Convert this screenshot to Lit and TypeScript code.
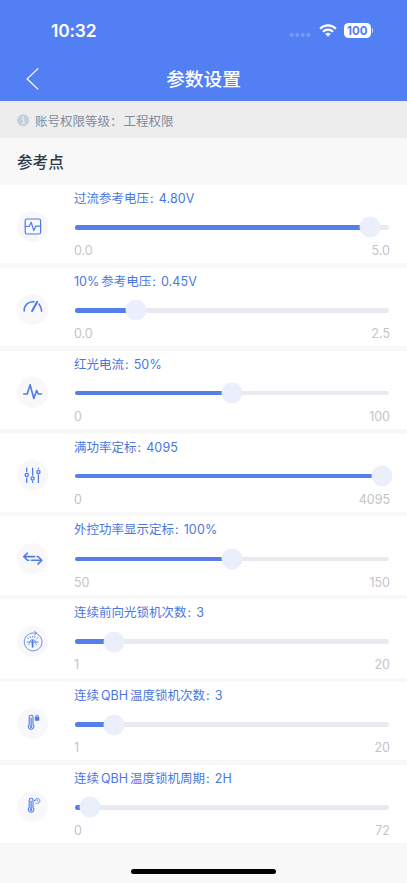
import { LitElement, html, svg, css } from "lit";
import { customElement, property } from "lit/decorators.js";

const icons: Record<string, unknown> = {
  scope: svg`<rect x="8.2" y="8" width="15.4" height="15" rx="1.8"/><path d="M8.2 15.5h4.1l1.9-4.3 2.6 8.4 1.9-4.4h4.9"/>`,
  gauge: svg`<g stroke-width="1.5"><path d="M7.2 17.2a8.6 8.6 0 0 1 9.8-9.4"/><path d="M22 10q2.3 3 2.6 7.2"/><path d="M20.2 7.8l-5.1 9.2" stroke-width="2.1"/></g>`,
  pulse: svg`<path stroke-width="1.6" d="M6.8 17h3.4l2.9-9.2 3.7 13.7 2.8-8.1 1.6 3.6h3.3"/>`,
  sliders: svg`<path stroke-width="1.3" d="M9.7 8.2v3.4M9.7 18.2v4.2M15.6 8.2v7M15.6 21.7v.7M21.4 8.2v.2M21.4 15v7.4"/><g stroke-width="1.3"><circle cx="9.7" cy="15" r="1.6"/><circle cx="15.6" cy="18.4" r="1.6"/><circle cx="21.4" cy="11.9" r="1.6"/></g>`,
  arrows: svg`<path stroke-width="1.6" d="M17.6 13.6H7M10.4 10 6.8 13.6l3.6 3.6M14.4 17.3H24.7M21 13.5l3.8 3.8-3.8 3.8M20.2 13.6h.2M11.6 17.3h.2"/>`,
  light: svg`<g stroke-width=".85"><path d="M20.6 8.2a8.9 8.9 0 1 1-5.6-1.1h4.6M17.4 5.2l2.3 2-2.3 2"/><path d="M12.6 16a3.2 3.2 0 0 1 6.2 0M10 16.1h11.4M15.6 11.2v-1M11.8 12.7l-1-1M19.6 12.7l1-1M13.7 11.6l-.4-.9M17.6 11.6l.4-.9M12.8 17.6l-1.4 1.2M18.6 17.6l1.4 1.2"/><path stroke-width="1.8" d="M15.6 15v5.8"/></g>`,
  tempLock: svg`<g stroke-width="1.1"><path d="M12.2 16.4V9.2a1.9 1.9 0 0 1 3.8 0v7.2a2.8 2.8 0 1 1-3.8 0z"/><path d="M14.1 10v7" stroke-width="1.2"/><circle cx="14.1" cy="18.6" r=".8"/><rect x="18.2" y="9" width="3.8" height="3.6" rx=".5" fill="currentColor" stroke-width=".6"/><path d="M18.9 9V8.2a1.2 1.2 0 0 1 2.4 0V9" stroke-width=".9"/></g>`,
  tempClock: svg`<g stroke-width="1.1"><path d="M12.2 16.4V9.2a1.9 1.9 0 0 1 3.8 0v7.2a2.8 2.8 0 1 1-3.8 0z"/><path d="M14.1 10v7" stroke-width="1.2"/><circle cx="14.1" cy="18.6" r=".8"/><path d="M17.7 9.8a2.6 2.6 0 1 1 1 2.2M17 9.1l.8.9.9-.8M20.2 8.6v1.4l1 .3" stroke-width=".75"/></g>`,
};

interface Param {
  icon: string;
  label: string[];
  value: string;
  min: string;
  max: string;
  ratio: number;
}

const params: Param[] = [
  { icon: "scope", label: ["过流参考电压"], value: "4.80V", min: "0.0", max: "5.0", ratio: 0.96 },
  { icon: "gauge", label: ["10%", "参考电压"], value: "0.45V", min: "0.0", max: "2.5", ratio: 0.18 },
  { icon: "pulse", label: ["红光电流"], value: "50%", min: "0", max: "100", ratio: 0.5 },
  { icon: "sliders", label: ["满功率定标"], value: "4095", min: "0", max: "4095", ratio: 1 },
  { icon: "arrows", label: ["外控功率显示定标"], value: "100%", min: "50", max: "150", ratio: 0.5 },
  { icon: "light", label: ["连续前向光锁机次数"], value: "3", min: "1", max: "20", ratio: 2 / 19 },
  { icon: "tempLock", label: ["连续", "QBH", "温度锁机次数"], value: "3", min: "1", max: "20", ratio: 2 / 19 },
  { icon: "tempClock", label: ["连续", "QBH", "温度锁机周期"], value: "2H", min: "0", max: "72", ratio: 2 / 72 },
];

@customElement("param-row")
export class ParamRow extends LitElement {
  @property({ attribute: false }) param!: Param;

  static styles = css`
    :host {
      display: flex;
      height: 78.4px;
      background: #fff;
      padding: 0 17px;
      box-sizing: border-box;
    }
    .icon {
      width: 31px;
      height: 31px;
      margin: 26.3px 26px 0 0;
      border-radius: 50%;
      background: #f8f8fb;
      color: #4f7bea;
      flex: none;
    }
    .icon svg {
      display: block;
      margin-left: -0.4px;
      fill: none;
      stroke: currentColor;
      stroke-width: 1.2;
      stroke-linecap: round;
      stroke-linejoin: round;
    }
    .body {
      flex: 1;
      display: flex;
      flex-direction: column;
    }
    .label {
      display: flex;
      height: 18px;
      margin-top: 5px;
      line-height: 18px;
      font-size: 12.5px;
      font-weight: 400;
      color: #4a77df;
      white-space: nowrap;
    }
    .label .part + .part {
      margin-left: 2px;
    }
    .colon {
      margin: 0 5px 0 1px;
    }
    .value {
      letter-spacing: 0.15px;
    }
    .slider {
      position: relative;
      width: 314px;
      height: 4.6px;
      margin: 17.2px 0 0 1px;
      border-radius: 3px;
      background: #e8eaf0;
    }
    .fill {
      height: 100%;
      border-radius: 3px;
      background: #5580ec;
    }
    .thumb {
      position: absolute;
      top: 50%;
      width: 21px;
      height: 21px;
      border-radius: 50%;
      background: #ebeffc;
      transform: translate(-50%, -50%);
    }
    .range {
      display: flex;
      justify-content: space-between;
      margin-top: 12.4px;
      line-height: 18px;
      font-size: 12.5px;
      color: #c3c4c7;
      width: 316px;
    }
  `;

  render() {
    const p = this.param;
    const x = 7 + 300 * p.ratio;
    return html`
      <div class="icon"><svg width="31" height="31" viewBox="0 0 31 31">${icons[p.icon]}</svg></div>
      <div class="body">
        <div class="label">
          ${p.label.map((t) => html`<span class="part">${t}</span>`)}<span class="colon">:</span><span class="value">${p.value}</span>
        </div>
        <div class="slider">
          <div class="fill" style="width:${x}px"></div>
          <div class="thumb" style="left:${x}px"></div>
        </div>
        <div class="range"><span>${p.min}</span><span>${p.max}</span></div>
      </div>
    `;
  }
}

@customElement("app-root")
export class AppRoot extends LitElement {
  static styles = css`
    :host {
      display: flex;
      flex-direction: column;
      height: 883px;
      overflow: hidden;
      background: #f8f8f8;
      font-family: Inter, "Noto Sans CJK SC", sans-serif;
    }
    .header {
      height: 101.3px;
      background: #527ff3;
      color: #fff;
      flex: none;
    }
    .status {
      display: flex;
      align-items: center;
      height: 61px;
      padding: 0 34px 0 51px;
      box-sizing: border-box;
    }
    .time {
      flex: 1;
      font-size: 17.4px;
      font-weight: 600;
      letter-spacing: -0.2px;
    }
    .status svg {
      display: block;
    }
    .dots {
      margin: 9px 8px 0 0;
    }
    .wifi {
      margin-right: 7px;
    }
    .battery {
      display: flex;
      align-items: center;
    }
    .level {
      width: 27px;
      height: 15px;
      border-radius: 4.6px;
      background: #fff;
      color: #527ff3;
      font-size: 11.5px;
      font-weight: 700;
      line-height: 16px;
      text-align: center;
    }
    .tip {
      width: 1.4px;
      height: 4.5px;
      margin-left: 0.8px;
      border-radius: 0 2px 2px 0;
      background: #c7d6fb;
    }
    .nav {
      display: grid;
      grid-template-columns: 60px 1fr 60px;
      align-items: center;
      height: 35px;
    }
    .back {
      margin-left: 25px;
      display: block;
    }
    .title {
      font-size: 18.7px;
      font-weight: 500;
      text-align: center;
      line-height: 28px;
      padding-top: 2px;
    }
    .notice {
      display: flex;
      align-items: center;
      height: 37.2px;
      padding-left: 17px;
      background: #ededed;
      color: #7f8b9b;
      font-size: 12.5px;
      flex: none;
    }
    .notice span {
      padding-top: 2px;
    }
    .notice svg {
      margin: 1px 5px 0 0;
    }
    .level-name {
      margin-left: 1px;
    }
    .section {
      height: 46.5px;
      line-height: 49px;
      padding-left: 17px;
      font-size: 15.6px;
      font-weight: 500;
      color: #303a4b;
      flex: none;
    }
    .list {
      display: flex;
      flex-direction: column;
      gap: 4.46px;
    }
    .home {
      width: 145px;
      height: 5px;
      margin: auto auto 9px;
      border-radius: 3px;
      background: #000;
    }
  `;

  render() {
    return html`
      <div class="header">
        <div class="status">
          <div class="time">10:32</div>
          <svg class="dots" width="22" height="4" viewBox="0 0 22 4" fill="#7b9df6">
            <rect x="1" y=".2" width="3.5" height="3.5" rx="1" /><rect x="6.5" y=".2" width="3.5" height="3.5" rx="1" />
            <rect x="12" y=".2" width="3.5" height="3.5" rx="1" /><rect x="17.5" y=".2" width="3.5" height="3.5" rx="1" />
          </svg>
          <svg class="wifi" width="18" height="13" viewBox="0 0 18 13" fill="none" stroke="#fff" stroke-width="2.3">
            <path d="M1.1 4.7a11.2 11.2 0 0 1 15.8 0M4 7.7a7.1 7.1 0 0 1 10 0" />
            <path d="M9 12.8 6.3 10a3.9 3.9 0 0 1 5.4 0z" fill="#fff" stroke="none" />
          </svg>
          <div class="battery"><div class="level">100</div><div class="tip"></div></div>
        </div>
        <div class="nav">
          <svg class="back" width="15" height="24" viewBox="0 0 15 24" fill="none" stroke="#fff" stroke-width="1.3">
            <path d="M13.2 1.4 2.2 11.9l11 10.5" />
          </svg>
          <div class="title">参数设置</div>
        </div>
      </div>
      <div class="notice">
        <svg width="13" height="13" viewBox="0 0 13 13">
          <circle cx="6.2" cy="6.2" r="6" fill="#c3cfdd" />
          <path d="M5 5.4h1.6v3.7M4.9 9.2h3" stroke="#ededed" stroke-width="1.1" fill="none" />
          <circle cx="6.2" cy="3.4" r=".9" fill="#ededed" />
        </svg>
        <span>账号权限等级：</span><span class="level-name">工程权限</span>
      </div>
      <div class="section">参考点</div>
      <div class="list">${params.map((p) => html`<param-row .param=${p}></param-row>`)}</div>
      <div class="home"></div>
    `;
  }
}
